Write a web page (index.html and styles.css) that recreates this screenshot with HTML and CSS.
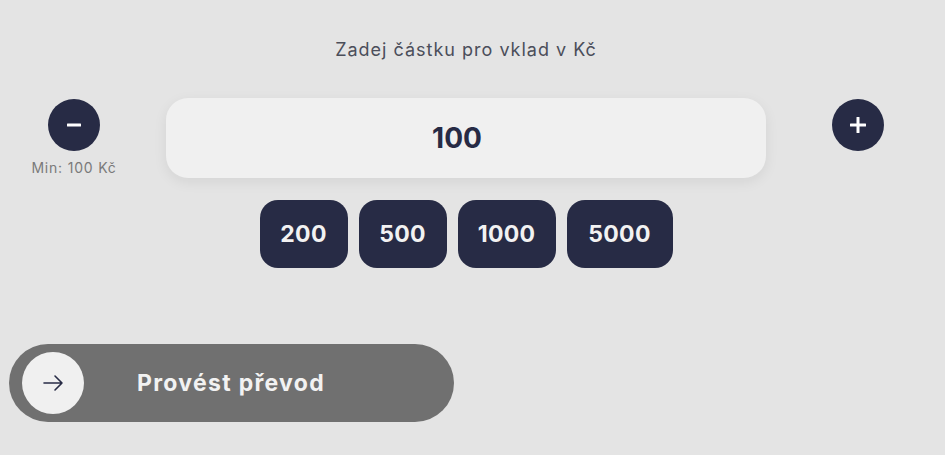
FILE: index.html
```html
<!DOCTYPE html>
<html lang="cs">
<head>
<meta charset="utf-8">
<title>Vklad</title>
<link rel="stylesheet" href="styles.css">
</head>
<body>
<div class="page">
  <div class="title">Zadej částku pro vklad v Kč</div>
  <div class="row">
    <div class="side">
      <button class="round" aria-label="minus">
        <svg width="18" height="18" viewBox="0 0 18 18"><rect x="2" y="7.5" width="14" height="3" rx="0.5" fill="#fff"/></svg>
      </button>
      <div class="min">Min: 100 Kč</div>
    </div>
    <div class="amount">100</div>
    <div class="side">
      <button class="round" aria-label="plus">
        <svg width="18" height="18" viewBox="0 0 18 18"><rect x="1" y="7.5" width="16" height="3" rx="0.5" fill="#fff"/><rect x="7.5" y="1" width="3" height="16" rx="0.5" fill="#fff"/></svg>
      </button>
    </div>
  </div>
  <div class="quick">
    <button class="chip w88">200</button>
    <button class="chip w88">500</button>
    <button class="chip w98">1000</button>
    <button class="chip w106">5000</button>
  </div>
  <button class="submit">
    <span class="knob">
      <svg width="24" height="24" viewBox="0 0 24 24" fill="none" stroke="#272b45" stroke-width="1.6" stroke-linecap="round" stroke-linejoin="round"><path d="M3 12h18M14 5l7 7-7 7"/></svg>
    </span>
    <span class="label">Provést převod</span>
  </button>
</div>
</body>
</html>
```

FILE: styles.css
```css
html, body {
  margin: 0;
  padding: 0;
  background: #e4e4e4;
  height: 100%;
}
body {
  font-family: "Inter", "Noto Sans", sans-serif;
}
.page {
  width: 932px;
  padding-top: 38px;
  display: flex;
  flex-direction: column;
}
.title {
  text-align: center;
  font-size: 18px;
  letter-spacing: 1px;
  line-height: 24px;
  color: #4b4e5a;
  height: 24px;
}
.row {
  margin-top: 36px;
  display: flex;
  gap: 18px;
  align-items: flex-start;
}
.side {
  width: 148px;
  display: flex;
  flex-direction: column;
  align-items: center;
  padding-top: 1px;
}
.round {
  width: 52px;
  height: 52px;
  border-radius: 50%;
  border: 0;
  padding: 0;
  background: #272b45;
  display: flex;
  align-items: center;
  justify-content: center;
}
.min {
  margin-top: 9px;
  font-size: 14px;
  letter-spacing: 0.8px;
  line-height: 16px;
  color: #7a7a7a;
}
.amount {
  width: 600px;
  height: 80px;
  box-sizing: border-box;
  padding-right: 18px;
  border-radius: 22px;
  background: #f0f0f0;
  box-shadow: 0 4px 14px rgba(0,0,0,0.07);
  display: flex;
  align-items: center;
  justify-content: center;
  font-size: 28px;
  font-weight: 700;
  color: #272b45;
}
.quick {
  margin-top: 22px;
  display: flex;
  justify-content: center;
  gap: 11px;
}
.chip {
  height: 68px;
  border: 0;
  border-radius: 18px;
  background: #272b45;
  color: #f2f2f2;
  font-family: inherit;
  font-size: 23px;
  letter-spacing: 0.3px;
  font-weight: 700;
  padding: 0;
}
.w88 { width: 88px; }
.w98 { width: 98px; }
.w106 { width: 106px; }
.submit {
  margin: 76px 0 0 9px;
  width: 445px;
  height: 78px;
  border: 0;
  border-radius: 39px;
  background: #707070;
  display: flex;
  align-items: center;
  padding: 0 0 0 13px;
  font-family: inherit;
}
.knob {
  width: 62px;
  height: 62px;
  border-radius: 50%;
  background: #f0f0f0;
  display: flex;
  align-items: center;
  justify-content: center;
}
.label {
  margin-left: 53px;
  color: #f2f2f2;
  font-size: 23px;
  letter-spacing: 1.3px;
  font-weight: 700;
}
```
